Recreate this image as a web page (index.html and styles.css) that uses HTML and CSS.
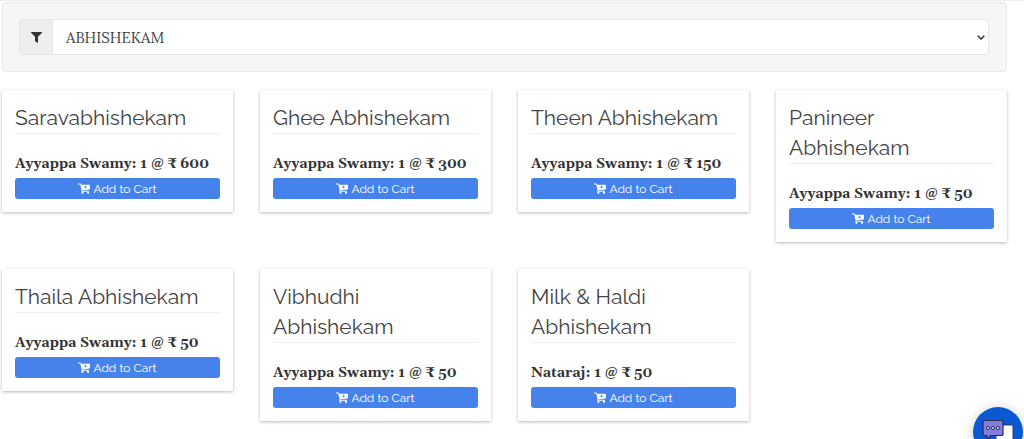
FILE: index.html
```html
<!DOCTYPE html>
<html lang="en">
<head>
<meta charset="utf-8">
<meta name="viewport" content="width=device-width, initial-scale=1">
<title>Abhishekam</title>
<link rel="stylesheet" href="styles.css">
</head>
<body>
<svg class="sprite" aria-hidden="true">
  <symbol id="cart" viewBox="0 0 13 12">
    <path fill="currentColor" fill-rule="evenodd" d="M0 .5h2.500q.6 0 .7.5l.2 1H12.500q.5 0 .5.500v3.900q0 .5-.5.600l-7.800.9.1.600H11.500q.5 0 .5.500t-.5.500H4.300q-.8 0-.7-.7l.3-1L2.400 1.500H0Q-.4 1 0 .5zM7.800 2.800v1.200H6.600v.8H7.800v1.200h.8V4.800h1.200v-.8H8.600V2.800z"/>
    <circle cx="4.800" cy="10.700" r="1.200" fill="currentColor"/><circle cx="10.900" cy="10.700" r="1.200" fill="currentColor"/>
  </symbol>
</svg>
<main class="page">
  <form class="filter">
    <div class="input-group">
      <label class="addon" for="category" aria-label="Filter by category">
        <svg class="funnel" viewBox="0 0 11 11" aria-hidden="true"><path fill="currentColor" d="M.4 0h10.200q.7.300.2.900L7 4.800v5.600q-.1.700-.8.400L4.200 9.200Q4 9 4 8.700V4.800L.2.900Q-.3.300.4 0z"/></svg>
      </label>
      <div class="select-wrap">
        <select class="select" id="category"><option>ABHISHEKAM</option></select>
        <svg class="chevron" viewBox="0 0 8 5" aria-hidden="true"><path d="M.7.800 4 4 7.300.8" fill="none" stroke="currentColor" stroke-width="1.500"/></svg>
      </div>
    </div>
  </form>
  <section class="grid">
    <article class="card"><h2 class="title">Saravabhishekam</h2><p class="price">Ayyappa Swamy: 1 @ ₹ 600</p><button class="add" type="button"><svg class="cart"><use href="#cart"/></svg>Add to Cart</button></article>
    <article class="card"><h2 class="title">Ghee Abhishekam</h2><p class="price">Ayyappa Swamy: 1 @ ₹ 300</p><button class="add" type="button"><svg class="cart"><use href="#cart"/></svg>Add to Cart</button></article>
    <article class="card"><h2 class="title">Theen Abhishekam</h2><p class="price">Ayyappa Swamy: 1 @ ₹ 150</p><button class="add" type="button"><svg class="cart"><use href="#cart"/></svg>Add to Cart</button></article>
    <article class="card"><h2 class="title">Panineer Abhishekam</h2><p class="price">Ayyappa Swamy: 1 @ ₹ 50</p><button class="add" type="button"><svg class="cart"><use href="#cart"/></svg>Add to Cart</button></article>
    <article class="card"><h2 class="title">Thaila Abhishekam</h2><p class="price">Ayyappa Swamy: 1 @ ₹ 50</p><button class="add" type="button"><svg class="cart"><use href="#cart"/></svg>Add to Cart</button></article>
    <article class="card"><h2 class="title">Vibhudhi Abhishekam</h2><p class="price">Ayyappa Swamy: 1 @ ₹ 50</p><button class="add" type="button"><svg class="cart"><use href="#cart"/></svg>Add to Cart</button></article>
    <article class="card"><h2 class="title">Milk &amp; Haldi Abhishekam</h2><p class="price">Nataraj: 1 @ ₹ 50</p><button class="add" type="button"><svg class="cart"><use href="#cart"/></svg>Add to Cart</button></article>
  </section>
</main>
<button class="chat" type="button" aria-label="Open chat">
  <svg class="chat-icon" viewBox="0 0 50 50" aria-hidden="true">
    <path d="M23 18h16q1 0 1 1v14q0 1-1 1h-2v5l-5-5h-9z" fill="#fff" stroke="#37396b"/>
    <path d="M11 13.500h18q1 0 1 1v13q0 1-1 1H18l-4 4v-4h-3q-1 0-1-1v-13q0-1 1-1z" fill="#837de0" stroke="#292b4d" stroke-width="1.200"/>
    <g fill="#c9c8ee" stroke="#34345c"><circle cx="15" cy="21" r="1.600"/><circle cx="20" cy="21" r="1.600"/><circle cx="25" cy="21" r="1.600"/></g>
  </svg>
</button>
</body>
</html>
```
FILE: styles.css
```css
* { box-sizing: border-box; }
html { overflow: hidden; }
body {
  margin: 0;
  background: #fff;
  color: #333;
  font-family: Raleway, Lato, sans-serif;
  border-top: 1px solid #eee;
}
.sprite { position: absolute; width: 0; height: 0; }
.page { padding: 1px 17px 16px 2px; }
.filter {
  margin-bottom: 18px;
  padding: 16px 17px 16px 16px;
  background: #f6f6f6;
  border: 1px solid #e8e8e8;
  border-radius: 4px;
}
.input-group { display: flex; height: 36px; }
.addon {
  display: flex;
  align-items: center;
  justify-content: center;
  width: 34px;
  background: #eee;
  border: 1px solid #e6e6e6;
  border-radius: 4px 0 0 4px;
}
.funnel { width: 11px; height: 11px; }
.select-wrap { position: relative; flex: 1; }
.select {
  width: 100%;
  height: 100%;
  padding: 0 24px 0 13px;
  appearance: none;
  background: #fff;
  border: 1px solid #e6e6e6;
  border-left: 0;
  border-radius: 0 4px 4px 0;
  color: #444;
  font: 15px Lora, "Liberation Serif", serif;
}
.chevron {
  position: absolute;
  right: 4px;
  top: 16px;
  width: 8px;
  height: 5px;
  pointer-events: none;
}
.grid {
  display: grid;
  grid-template-columns: repeat(4, minmax(0, 1fr));
  align-items: start;
  gap: 27px;
}
.card {
  padding: 13px;
  background: #fff;
  box-shadow: 0 1px 3px rgba(0, 0, 0, .28);
}
.title {
  margin: 0 0 19px;
  border-bottom: 1px solid #eee;
  color: #444;
  font-size: 21px;
  font-weight: 400;
  line-height: 30px;
}
.price {
  margin: 0 0 3px;
  font: bold 14px/22px Georgia, Gelasio, "Liberation Serif", serif;
  font-variant-numeric: oldstyle-nums;
  white-space: nowrap;
}
.add {
  display: flex;
  align-items: center;
  justify-content: center;
  gap: 3px;
  width: 100%;
  height: 21px;
  padding: 0;
  border: 0;
  border-radius: 3px;
  background: #4682ec;
  color: #fff;
  font: 400 12px/20px Raleway, Lato, sans-serif;
}
.cart { width: 12px; height: 11px; }
.chat {
  position: fixed;
  right: 1px;
  bottom: -18px;
  width: 50px;
  height: 50px;
  padding: 0;
  border: 0;
  border-radius: 50%;
  background: #0b59d2;
  box-shadow: 0 1px 12px rgba(0, 0, 0, .2);
}
.chat-icon { display: block; width: 50px; height: 50px; }
```
